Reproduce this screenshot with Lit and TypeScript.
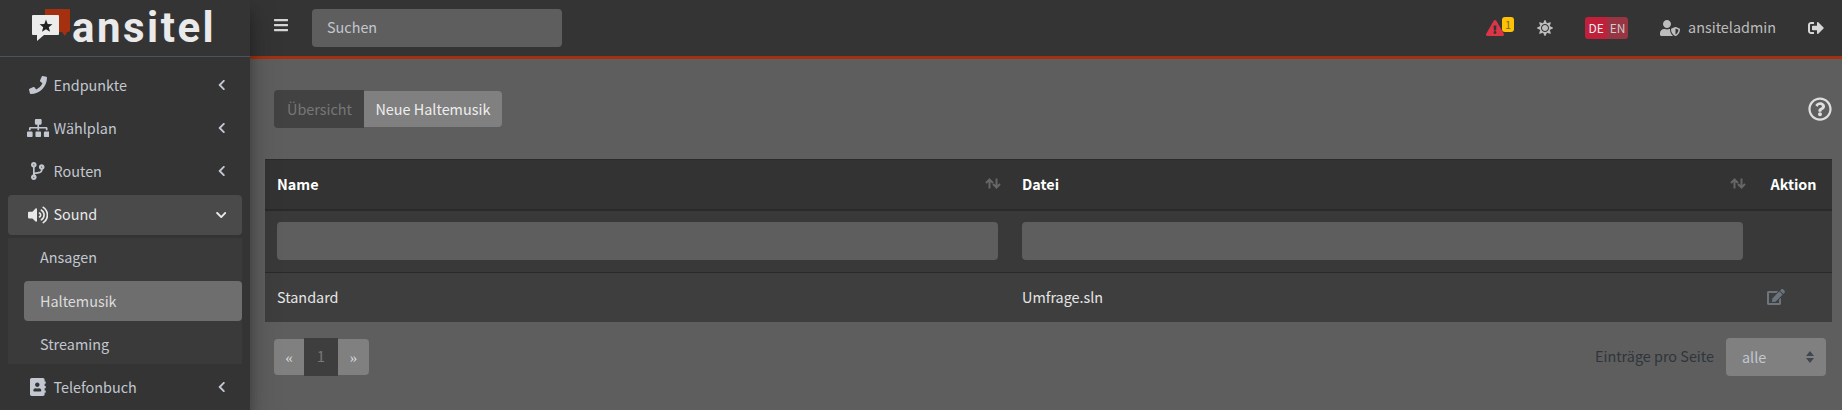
import { LitElement, html, css, svg } from 'lit';
import { customElement } from 'lit/decorators.js';

// fontawesome style icons, [viewBox width, path]
const icons: Record<string, [number, string]> = {
  phone: [512, 'M493.4 24.6l-104-24c-11.3-2.6-22.9 3.3-27.5 13.9l-48 112c-4.2 9.8-1.4 21.3 6.9 28l60.6 49.6c-36 76.7-98.9 140.5-177.2 177.2l-49.6-60.6c-6.8-8.3-18.2-11.1-28-6.9l-112 48C3.9 366.5-2 378.1.6 389.4l24 104C27.1 504.2 36.7 512 48 512c256.1 0 464-207.5 464-464 0-11.2-7.7-20.9-18.6-23.4z'],
  sitemap: [640, 'M128 352H32c-17.67 0-32 14.33-32 32v96c0 17.67 14.33 32 32 32h96c17.67 0 32-14.33 32-32v-96c0-17.67-14.33-32-32-32zm-24-80h192v48h48v-48h192v48h48v-57.59c0-21.17-17.23-38.41-38.41-38.41H344v-64h40c17.67 0 32-14.33 32-32V32c0-17.67-14.33-32-32-32H256c-17.67 0-32 14.33-32 32v96c0 17.67 14.33 32 32 32h40v64H94.41C73.23 224 56 241.23 56 262.41V320h48v-48zm264 80h-96c-17.67 0-32 14.33-32 32v96c0 17.67 14.33 32 32 32h96c17.67 0 32-14.33 32-32v-96c0-17.67-14.33-32-32-32zm240 0h-96c-17.67 0-32 14.33-32 32v96c0 17.67 14.33 32 32 32h96c17.67 0 32-14.33 32-32v-96c0-17.67-14.33-32-32-32z'],
  branch: [384, 'M384 144c0-44.2-35.8-80-80-80s-80 35.8-80 80c0 36.4 24.3 67.1 57.5 76.8-.6 16.1-4.2 28.5-11 36.9-15.4 19.2-49.3 22.4-85.2 25.7-28.2 2.6-57.4 5.4-81.3 16.9v-144c32.5-10.2 56-40.5 56-76.3 0-44.2-35.8-80-80-80S0 35.8 0 80c0 35.8 23.5 66.1 56 76.3v199.3C23.5 365.9 0 396.2 0 432c0 44.2 35.8 80 80 80s80-35.8 80-80c0-34-21.2-63.1-51.2-74.6 3.1-5.2 7.8-9.8 14.9-13.4 16.2-8.2 40.4-10.4 66.1-12.8 42.2-3.9 90-8.4 118.2-43.4 14-17.4 21.1-39.8 21.6-67.9 31.6-10.8 54.4-40.7 54.4-75.9zM80 64c8.8 0 16 7.2 16 16s-7.2 16-16 16-16-7.2-16-16 7.2-16 16-16zm0 384c-8.8 0-16-7.2-16-16s7.2-16 16-16 16 7.2 16 16-7.2 16-16 16zm224-320c8.8 0 16 7.2 16 16s-7.2 16-16 16-16-7.2-16-16 7.2-16 16-16z'],
  volume: [576, 'M215.03 71.05L126.06 160H24c-13.26 0-24 10.74-24 24v144c0 13.25 10.74 24 24 24h102.06l88.97 88.95c15.03 15.03 40.97 4.47 40.97-16.97V88.02c0-21.46-25.96-31.98-40.97-16.97zm233.32-51.08c-11.17-7.33-26.18-4.24-33.51 6.95-7.34 11.17-4.22 26.18 6.95 33.51 66.27 43.49 105.82 116.6 105.82 195.58 0 78.98-39.55 152.09-105.82 195.58-11.17 7.32-14.29 22.34-6.95 33.5 7.04 10.71 21.93 14.56 33.51 6.95C528.27 439.58 576 351.33 576 256S528.27 72.43 448.35 19.97zM480 256c0-63.53-32.06-121.94-85.77-156.24-11.19-7.14-26.03-3.82-33.12 7.46s-3.78 26.21 7.41 33.36C408.27 165.97 432 209.11 432 256s-23.73 90.03-63.48 115.42c-11.19 7.14-14.5 22.07-7.41 33.36 6.51 10.36 21.12 15.14 33.12 7.46C447.94 377.94 480 319.54 480 256zm-141.77-76.87c-11.58-6.33-26.19-2.16-32.61 9.45-6.39 11.61-2.16 26.2 9.45 32.61C327.98 228.28 336 241.63 336 256c0 14.38-8.02 27.72-20.92 34.81-11.61 6.41-15.84 21-9.45 32.61 6.43 11.66 21.05 15.8 32.61 9.45 28.23-15.55 45.77-45 45.77-76.88s-17.54-61.32-45.78-76.86z'],
  book: [448, 'M436 160c6.6 0 12-5.4 12-12v-40c0-6.6-5.4-12-12-12h-20V48c0-26.5-21.5-48-48-48H48C21.5 0 0 21.5 0 48v416c0 26.5 21.5 48 48 48h320c26.5 0 48-21.5 48-48v-48h20c6.6 0 12-5.4 12-12v-40c0-6.6-5.4-12-12-12h-20v-64h20c6.6 0 12-5.4 12-12v-40c0-6.6-5.4-12-12-12h-20v-64h20zm-228-32c35.3 0 64 28.7 64 64s-28.7 64-64 64-64-28.7-64-64 28.7-64 64-64zm112 236.8c0 10.6-10 19.2-22.4 19.2H118.4C106 384 96 375.4 96 364.8v-19.2c0-31.8 30.1-57.6 67.2-57.6h5c12.3 5.1 25.7 8 39.8 8s27.6-2.9 39.8-8h5c37.1 0 67.2 25.8 67.2 57.6v19.2z'],
  left: [320, 'M34.52 239.03L228.87 44.69c9.37-9.37 24.57-9.37 33.94 0l22.67 22.67c9.36 9.36 9.37 24.52.04 33.9L131.49 256l154.02 154.75c9.34 9.38 9.32 24.54-.04 33.9l-22.67 22.67c-9.37 9.37-24.57 9.37-33.94 0L34.52 272.97c-9.37-9.37-9.37-24.57 0-33.94z'],
  down: [448, 'M207.029 381.476L12.686 187.132c-9.373-9.373-9.373-24.569 0-33.941l22.667-22.667c9.357-9.357 24.522-9.375 33.901-.04L224 284.505l154.745-154.021c9.379-9.335 24.544-9.317 33.901.04l22.667 22.667c9.373 9.373 9.373 24.569 0 33.941L240.971 381.476c-9.373 9.372-24.569 9.372-33.942 0z'],
  bars: [448, 'M16 132h416c8.837 0 16-7.163 16-16V76c0-8.837-7.163-16-16-16H16C7.163 60 0 67.163 0 76v40c0 8.837 7.163 16 16 16zm0 160h416c8.837 0 16-7.163 16-16v-40c0-8.837-7.163-16-16-16H16c-8.837 0-16 7.163-16 16v40c0 8.837 7.163 16 16 16zm0 160h416c8.837 0 16-7.163 16-16v-40c0-8.837-7.163-16-16-16H16c-8.837 0-16 7.163-16 16v40c0 8.837 7.163 16 16 16z'],
  warn: [576, 'M569.517 440.013C587.975 472.007 564.806 512 527.94 512H48.054c-36.937 0-59.999-40.055-41.577-71.987L246.423 23.985c18.467-32.009 64.72-31.951 83.154 0l239.94 416.028zM288 354c-25.405 0-46 20.595-46 46s20.595 46 46 46 46-20.595 46-46-20.595-46-46-46zm-43.673-165.346l7.418 136c.347 6.364 5.609 11.346 11.982 11.346h48.546c6.373 0 11.635-4.982 11.982-11.346l7.418-136c.375-6.874-5.098-12.654-11.982-12.654h-63.383c-6.884 0-12.356 5.78-11.981 12.654z'],
  sun: [512, 'M256 160c-52.9 0-96 43.1-96 96s43.1 96 96 96 96-43.1 96-96-43.1-96-96-96zm246.4 80.5l-94.7-47.3 33.5-100.4c4.5-13.6-8.4-26.5-21.9-21.9l-100.4 33.5-47.4-94.8c-6.4-12.8-24.6-12.8-31 0l-47.3 94.7L92.7 70.8c-13.6-4.5-26.5 8.4-21.9 21.9l33.5 100.4-94.7 47.4c-12.8 6.4-12.8 24.6 0 31l94.7 47.3-33.5 100.5c-4.5 13.6 8.4 26.5 21.9 21.9l100.4-33.5 47.3 94.7c6.4 12.8 24.6 12.8 31 0l47.3-94.7 100.4 33.5c13.6 4.5 26.5-8.4 21.9-21.9l-33.5-100.4 94.7-47.3c13-6.5 13-24.7.2-31.1zm-155.9 106c-49.9 49.9-131.1 49.9-181 0-49.9-49.9-49.9-131.1 0-181 49.9-49.9 131.1-49.9 181 0 49.9 49.9 49.9 131.1 0 181z'],
  shield: [640, 'M622.3 271.1l-115.2-45c-4.1-1.6-12.6-3.7-22.2 0l-115.2 45c-10.7 4.2-17.7 14-17.7 24.9 0 111.6 68.7 188.8 132.9 213.9 9.6 3.7 18 1.6 22.2 0C558.4 489.9 640 420.5 640 296c0-10.9-7-20.7-17.7-24.9zM496 462.4V273.3l95.5 37.3c-5.6 87.1-60.9 135.4-95.5 151.8zM224 256c70.7 0 128-57.3 128-128S294.7 0 224 0 96 57.3 96 128s57.3 128 128 128zm96 40c0-2.5.8-4.8 1.1-7.2-2.5-.1-4.9-.8-7.5-.8h-16.7c-22.2 10.2-46.9 16-72.9 16s-50.6-5.8-72.9-16h-16.7C60.2 288 0 348.2 0 422.4V464c0 26.5 21.5 48 48 48h352c6.8 0 13.3-1.5 19.2-4-54-42.9-99.2-116.7-99.2-208z'],
  logout: [512, 'M497 273L329 441c-15 15-41 4.5-41-17v-96H152c-13.3 0-24-10.7-24-24v-96c0-13.3 10.7-24 24-24h136V88c0-21.4 25.9-32 41-17l168 168c9.3 9.4 9.3 24.6 0 34zM192 436v-40c0-6.6-5.4-12-12-12H96c-17.7 0-32-14.3-32-32V160c0-17.7 14.3-32 32-32h84c6.6 0 12-5.4 12-12V76c0-6.6-5.4-12-12-12H96c-53 0-96 43-96 96v192c0 53 43 96 96 96h84c6.6 0 12-5.4 12-12z'],
  edit: [576, 'M402.6 83.2l90.2 90.2c3.8 3.8 3.8 10 0 13.8L274.4 405.6l-92.8 10.3c-12.4 1.4-22.9-9.1-21.5-21.5l10.3-92.8L388.8 83.2c3.8-3.8 10-3.8 13.8 0zm162-22.9l-48.8-48.8c-15.2-15.2-39.9-15.2-55.2 0l-35.4 35.4c-3.8 3.8-3.8 10 0 13.8l90.2 90.2c3.8 3.8 10 3.8 13.8 0l35.4-35.4c15.2-15.3 15.2-40 0-55.2zM384 346.2V448H64V128h229.8c3.2 0 6.2-1.3 8.5-3.5l40-40c7.6-7.6 2.2-20.5-8.5-20.5H48C21.5 64 0 85.5 0 112v352c0 26.5 21.5 48 48 48h352c26.5 0 48-21.5 48-48V306.2c0-10.7-12.9-16-20.5-8.5l-40 40c-2.2 2.3-3.5 5.3-3.5 8.5z'],
  help: [512, 'M256 8C119.043 8 8 119.083 8 256c0 136.997 111.043 248 248 248s248-111.003 248-248C504 119.083 392.957 8 256 8zm0 448c-110.532 0-200-89.431-200-200 0-110.495 89.472-200 200-200 110.491 0 200 89.471 200 200 0 110.53-89.431 200-200 200zm107.244-255.2c0 67.052-72.421 68.084-72.421 92.863V300c0 6.627-5.373 12-12 12h-45.647c-6.627 0-12-5.373-12-12v-8.659c0-35.745 27.1-50.034 47.579-61.516 17.561-9.845 28.324-16.541 28.324-29.579 0-17.246-21.999-28.693-39.784-28.693-23.189 0-33.894 10.977-48.942 29.969-4.057 5.12-11.46 6.071-16.666 2.124l-27.824-21.098c-5.107-3.872-6.251-11.066-2.644-16.363C184.846 131.491 214.94 112 261.794 112c49.071 0 101.45 38.304 101.45 88.8zM298 368c0 23.159-18.841 42-42 42s-42-18.841-42-42 18.841-42 42-42 42 18.841 42 42z'],
};

const icon = (name: string, size: number) => {
  const [w, d] = icons[name];
  return html`<svg class="ic" width=${size * w / 512} height=${size} viewBox="0 0 ${w} 512" fill="currentColor">${svg`<path d=${d}></path>`}</svg>`;
};

const sortArrows = html`<svg class="sort" width="16" height="11" viewBox="0 0 16 11" fill="none" stroke="#666" stroke-width="2">
  <path d="M4.5 10.5V2M1 5l3.5-3.5L8 5"></path>
  <path d="M11.5 .5V9M8 6l3.5 3.5L15 6"></path>
</svg>`;

const nav = [
  { label: 'Endpunkte', icon: 'phone' },
  { label: 'Wählplan', icon: 'sitemap' },
  { label: 'Routen', icon: 'branch' },
];

@customElement('app-root')
export class AppRoot extends LitElement {
  static override styles = css`
    :host {
      display: grid;
      grid-template-columns: 250px 1fr;
      width: 100%;
      height: 410px;
      overflow: hidden;
      background: #5e5e5e;
      font: 400 14.4px/24px "Noto Sans CJK SC", "Lato", sans-serif;
      color: #c2c7d0;
    }
    .ic { display: block; flex: none; }
    .t { display: block; }

    aside {
      position: relative;
      z-index: 2;
      background: #343434;
      box-shadow: 0 14px 28px rgba(0,0,0,.25), 0 10px 10px rgba(0,0,0,.22);
    }
    .brand {
      display: flex;
      align-items: center;
      gap: 1px;
      height: 56px;
      box-sizing: content-box;
      padding-left: 32px;
      border-bottom: 1px solid #4b545c;
    }
    .brand svg { flex: none; margin-bottom: 6px; }
    .brand span {
      font-family: Roboto, sans-serif;
      font-size: 42px;
      line-height: 50px;
      font-weight: 700;
      letter-spacing: 2.5px;
      color: #eaeaea;
    }
    nav { display: flex; flex-direction: column; gap: 3.2px; padding: 8px 8px 0; }
    .item {
      display: flex;
      align-items: center;
      height: 40px;
      border-radius: 4px;
      padding: 0 17px 0 15px;
      flex: none;
    }
    .item .i { width: 30px; display: flex; justify-content: center; margin-right: .5px; }
    .item .label { flex: 1; margin-top: -1px; }
    .item.open { background: #4a4a4a; color: #e9e9e9; padding-right: 16px; }
    .sub {
      display: flex;
      flex-direction: column;
      gap: 3.2px;
      background: #3a3a3a;
    }
    .sub div {
      height: 40px;
      line-height: 40px;
      margin-left: 16px;
      padding-left: 16px;
      border-radius: 4px;
    }
    .sub div:first-child { line-height: 38.6px; }
    .sub .on { background: #6e6e6e; color: #dcdcdc; }

    main { display: flex; flex-direction: column; min-width: 0; }
    header {
      flex: none;
      display: flex;
      align-items: center;
      height: 56px;
      padding: 0 18px 0 24px;
      background: #343434;
      border-bottom: 3px solid #a5300f;
      box-sizing: content-box;
    }
    .burger { color: #d6d6d6; margin-right: 24px; margin-top: -6px; }
    .search {
      width: 250px;
      height: 38px;
      box-sizing: border-box;
      padding: 0 15px;
      line-height: 36px;
      background: #5e5e5e;
      border-radius: 4px;
      color: #c2c7d0;
    }
    .spacer { flex: 1; }
    .alert { position: relative; color: #dc3545; margin-right: 33px; }
    .badge {
      position: absolute;
      top: -3px;
      right: -10px;
      width: 12px;
      height: 15px;
      border-radius: 3px;
      background: #ffc107;
      color: #7a6a20;
      font-size: 11px;
      line-height: 14px;
      text-align: center;
    }
    .sun { color: #bdbdbd; margin-right: 32px; }
    .lang { display: flex; margin-right: 32px; font-size: 12px; line-height: 21px; height: 22px; border-radius: 3px; overflow: hidden; text-align: center; }
    .lang b { font-weight: 400; width: 22px; background: #c21f3a; color: #eee; }
    .lang i { font-style: normal; width: 21px; background: #973543; color: #ccc; }
    .user { color: #bdbdbd; margin-right: 8px; }
    .name { color: #bdbdbd; margin-right: 32px; margin-top: -2px; }
    .out { color: #d6d6d6; }

    .content { padding: 0 10px 0 15px; }
    .bar {
      display: flex;
      justify-content: space-between;
      align-items: center;
      padding: 31px 0 31px 9px;
    }
    .tabs { display: flex; align-items: center; }
    .tabs div { height: 38px; line-height: 38px; box-sizing: border-box; }
    .tabs .off { background: #424242; color: #777; padding: 0 12px 0 13px; border-radius: 4px 0 0 4px; }
    .tabs .act { height: 36px; line-height: 36px; background: #808080; color: #eee; padding: 0 11.5px; border-radius: 0 4px 4px 0; }
    .help { color: #dedede; }

    table { width: 100%; border-collapse: collapse; table-layout: fixed; }
    th, td { padding: 0 12px; text-align: left; box-sizing: border-box; }
    th { height: 50px; background: #333; color: #fff; font-weight: 700; border-top: 1px solid #2a2a2a; border-bottom: 2px solid #2a2a2a; }
    th:last-child { padding-left: 15.5px; }
    .thc { display: flex; align-items: center; justify-content: space-between; }
    .thc .sort { margin-right: -3px; margin-top: -2px; }
    .filter td { height: 63px; background: #393939; border-bottom: 1px solid #2a2a2a; }
    .filter div { height: 38px; border-radius: 4px; background: #5e5e5e; }
    .row td { height: 49px; background: #3e3e3e; color: #e6e6e6; }
    .row td.edit { color: #6c757d; }

    .foot {
      display: flex;
      justify-content: space-between;
      align-items: center;
      padding: 16px 6px 0 9px;
    }
    .pages { display: flex; align-items: center; height: 38px; font-family: "Liberation Serif", serif; }
    .pages span { height: 36px; line-height: 38px; text-align: center; background: #808080; color: #dadada; font-size: 15px; }
    .pages .prev { width: 30px; border-radius: 4px 0 0 4px; }
    .pages .next { width: 31px; border-radius: 0 4px 4px 0; }
    .pages .cur { width: 34px; height: 38px; line-height: 36px; background: #3e3e3e; color: #777; font-family: "Noto Sans CJK SC", sans-serif; }
    .per { display: flex; align-items: center; gap: 12px; color: #2f353b; }
    .per > .t { margin-top: -2px; }
    .select {
      display: flex;
      align-items: center;
      justify-content: space-between;
      width: 100px;
      height: 38px;
      box-sizing: border-box;
      padding: 0 12px 0 16px;
      border-radius: 4px;
      background: #808080;
      color: #c2c7d0;
    }
  `;

  override render() {
    return html`
      <aside>
        <div class="brand">
          <svg width="39" height="33" viewBox="0 0 39 33">
            <path d="M13 0h24a1 1 0 0 1 1 1v20a2 2 0 0 1-2 2h-1l-2 4-3-4H13z" fill="#a5300f"></path>
            <path d="M1 6h25a1 1 0 0 1 1 1v18a1 1 0 0 1-1 1H12l-7 6v-6H1a1 1 0 0 1-1-1V7a1 1 0 0 1 1-1z" fill="#ececec"></path>
            <path d="M14 10.5l1.7 4.4 4.7.3-3.6 3 1.2 4.6-4-2.5-4 2.5 1.2-4.6-3.6-3 4.7-.3z" fill="#222"></path>
          </svg>
          <span>ansitel</span>
        </div>
        <nav>
          ${nav.map(n => html`
            <div class="item">
              <div class="i">${icon(n.icon, 18)}</div>
              <div class="label">${n.label}</div>
              ${icon('left', 12)}
            </div>`)}
          <div class="item open">
            <div class="i">${icon('volume', 18)}</div>
            <div class="label">Sound</div>
            ${icon('down', 12)}
          </div>
          <div class="sub">
            <div>Ansagen</div>
            <div class="on">Haltemusik</div>
            <div>Streaming</div>
          </div>
          <div class="item">
            <div class="i">${icon('book', 18)}</div>
            <div class="label">Telefonbuch</div>
            ${icon('left', 12)}
          </div>
        </nav>
      </aside>
      <main>
        <header>
          <div class="burger">${icon('bars', 16)}</div>
          <div class="search">Suchen</div>
          <div class="spacer"></div>
          <div class="alert">${icon('warn', 16)}<span class="badge">1</span></div>
          <div class="sun">${icon('sun', 16)}</div>
          <div class="lang"><b>DE</b><i>EN</i></div>
          <div class="user">${icon('shield', 16)}</div>
          <div class="name">ansiteladmin</div>
          <div class="out">${icon('logout', 16)}</div>
        </header>
        <div class="content">
          <div class="bar">
            <div class="tabs"><div class="off">Übersicht</div><div class="act">Neue Haltemusik</div></div>
            <div class="help">${icon('help', 24)}</div>
          </div>
          <table>
            <colgroup><col style="width:745px"><col style="width:745px"><col></colgroup>
            <thead>
              <tr>
                <th><div class="thc"><span class="t">Name</span> ${sortArrows}</div></th>
                <th><div class="thc"><span class="t">Datei</span> ${sortArrows}</div></th>
                <th><span class="t">Aktion</span></th>
              </tr>
            </thead>
            <tbody>
              <tr class="filter"><td><div></div></td><td><div></div></td><td></td></tr>
              <tr class="row">
                <td><span class="t">Standard</span></td>
                <td><span class="t">Umfrage.sln</span></td>
                <td class="edit">${icon('edit', 16)}</td>
              </tr>
            </tbody>
          </table>
          <div class="foot">
            <div class="pages"><span class="prev">«</span><span class="cur">1</span><span class="next">»</span></div>
            <div class="per">
              <span class="t">Einträge pro Seite</span>
              <div class="select"><span class="t">alle</span>
                <svg width="8" height="12" viewBox="0 0 8 12" fill="#3f4650"><path d="M4 0l4 5H0zM4 12L0 7h8z"></path></svg>
              </div>
            </div>
          </div>
        </div>
      </main>
    `;
  }
}
